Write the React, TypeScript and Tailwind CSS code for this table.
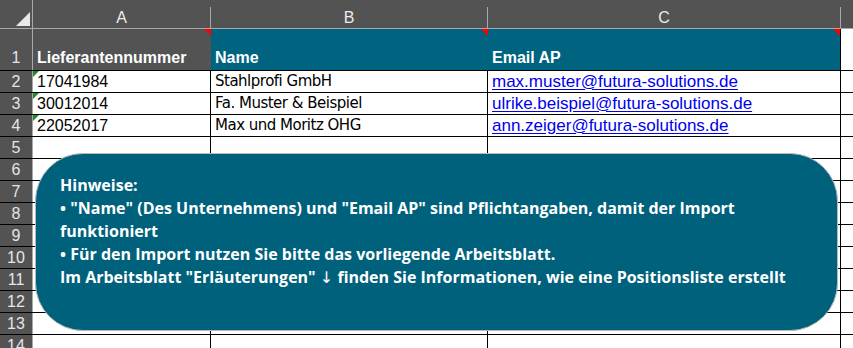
const rows = [
  { n: "17041984", name: "Stahlprofi GmbH", mail: "max.muster@futura-solutions.de" },
  { n: "30012014", name: "Fa. Muster & Beispiel", mail: "ulrike.beispiel@futura-solutions.de" },
  { n: "22052017", name: "Max und Moritz OHG", mail: "ann.zeiger@futura-solutions.de" },
];

const emptyRows = [5, 6, 7, 8, 9, 10, 11, 12, 13, 14];

function RedMark() {
  return (
    <div className="absolute right-0 top-0 w-0 h-0 border-t-[7px] border-l-[7px] border-t-[#ff0000] border-l-transparent" />
  );
}

function GreenMark() {
  return (
    <div className="absolute left-0 top-0 w-0 h-0 border-t-[6px] border-r-[6px] border-t-[#1e8a2e] border-r-transparent" />
  );
}

export default function App() {
  return (
    <div className="relative w-[853px] h-[348px] overflow-hidden bg-white font-['Liberation_Sans',Arial,sans-serif]">
      {/* column headers */}
      <div className="flex h-[29px] bg-[#535353] border-b border-[#a8a8a8]">
        <div className="relative w-[33px] shrink-0 border-r border-[#a8a8a8]">
          <div className="absolute right-[2px] bottom-[2px] w-0 h-0 border-b-[14px] border-l-[14px] border-b-[#e8e8e8] border-l-transparent" />
        </div>
        <div className="w-[178px] shrink-0 border-r border-[#a8a8a8] mt-[7px] flex items-start justify-center text-[16px] text-[#ececec] leading-[22px]">
          A
        </div>
        <div className="w-[277px] shrink-0 border-r border-[#a8a8a8] mt-[7px] flex items-start justify-center text-[16px] text-[#ececec] leading-[22px]">
          B
        </div>
        <div className="w-[353px] shrink-0 border-r border-[#a8a8a8] mt-[7px] flex items-start justify-center text-[16px] text-[#ececec] leading-[22px]">
          C
        </div>
        <div className="flex-1" />
      </div>

      {/* row 1 */}
      <div className="flex h-[42px] border-b border-black">
        <div className="w-[33px] shrink-0 bg-[#535353] border-r border-[#a8a8a8] flex items-end justify-center text-[16px] text-[#e6e6e6]">
          1
        </div>
        <div className="relative w-[178px] shrink-0 bg-[#535353] flex items-end pl-[4px] text-[16px] font-bold text-white">
          Lieferantennummer
          <RedMark />
        </div>
        <div className="relative w-[277px] shrink-0 bg-[#00637f] flex items-end pl-[4px] text-[16px] font-bold text-white">
          Name
          <RedMark />
        </div>
        <div className="relative w-[353px] shrink-0 bg-[#00637f] border-r border-black flex items-end pl-[4px] text-[16px] font-bold text-white">
          Email AP
          <RedMark />
        </div>
        <div className="flex-1" />
      </div>

      {/* data rows */}
      {rows.map((r, i) => (
        <div key={i} className="flex h-[22px] border-b border-black">
          <div className="w-[33px] shrink-0 bg-[#535353] border-r border-[#a8a8a8] flex items-center justify-center text-[16px] text-[#e6e6e6]">
            {i + 2}
          </div>
          <div className="relative w-[178px] shrink-0 border-r border-black flex items-center pl-[4px] text-[16px] text-black">
            {r.n}
            <GreenMark />
          </div>
          <div className="w-[277px] shrink-0 border-r border-black flex items-center pl-[4px] text-[15px] text-black font-['DejaVu_Sans',Tahoma,sans-serif] tracking-[-0.5px]">
            {r.name}
          </div>
          <div className="w-[353px] shrink-0 border-r border-black flex items-center pl-[4px] text-[17px] text-[#0000ee] underline underline-offset-2">
            {r.mail}
          </div>
          <div className="flex-1" />
        </div>
      ))}

      {emptyRows.map((n) => (
        <div key={n} className="flex h-[22px] border-b border-black">
          <div className="w-[33px] shrink-0 bg-[#535353] border-r border-[#a8a8a8] flex items-center justify-center text-[16px] text-[#e6e6e6]">
            {n}
          </div>
          <div className="w-[178px] shrink-0 border-r border-black" />
          <div className="w-[277px] shrink-0 border-r border-black" />
          <div className="w-[353px] shrink-0 border-r border-black" />
          <div className="flex-1" />
        </div>
      ))}

      {/* callout shape over the sheet */}
      <div className="absolute left-[35px] top-[153px] w-[803px] h-[178px] rounded-[48px] bg-[#00617c] border border-[#b9b9b9] pl-[24px] pt-[20px] text-white font-['Open_Sans',sans-serif] font-bold text-[16px] leading-[23px]">
        <div className="whitespace-nowrap">Hinweise:</div>
        <div className="whitespace-nowrap">
          • "Name" (Des Unternehmens) und "Email AP" sind Pflichtangaben, damit der Import
        </div>
        <div className="whitespace-nowrap">funktioniert</div>
        <div className="whitespace-nowrap">• Für den Import nutzen Sie bitte das vorliegende Arbeitsblatt.</div>
        <div className="whitespace-nowrap">
          Im Arbeitsblatt "Erläuterungen"{" "}
          <span className="font-['DejaVu_Sans',sans-serif] font-normal">↓</span> finden Sie Informationen, wie
          eine Positionsliste erstellt
        </div>
      </div>
    </div>
  );
}
